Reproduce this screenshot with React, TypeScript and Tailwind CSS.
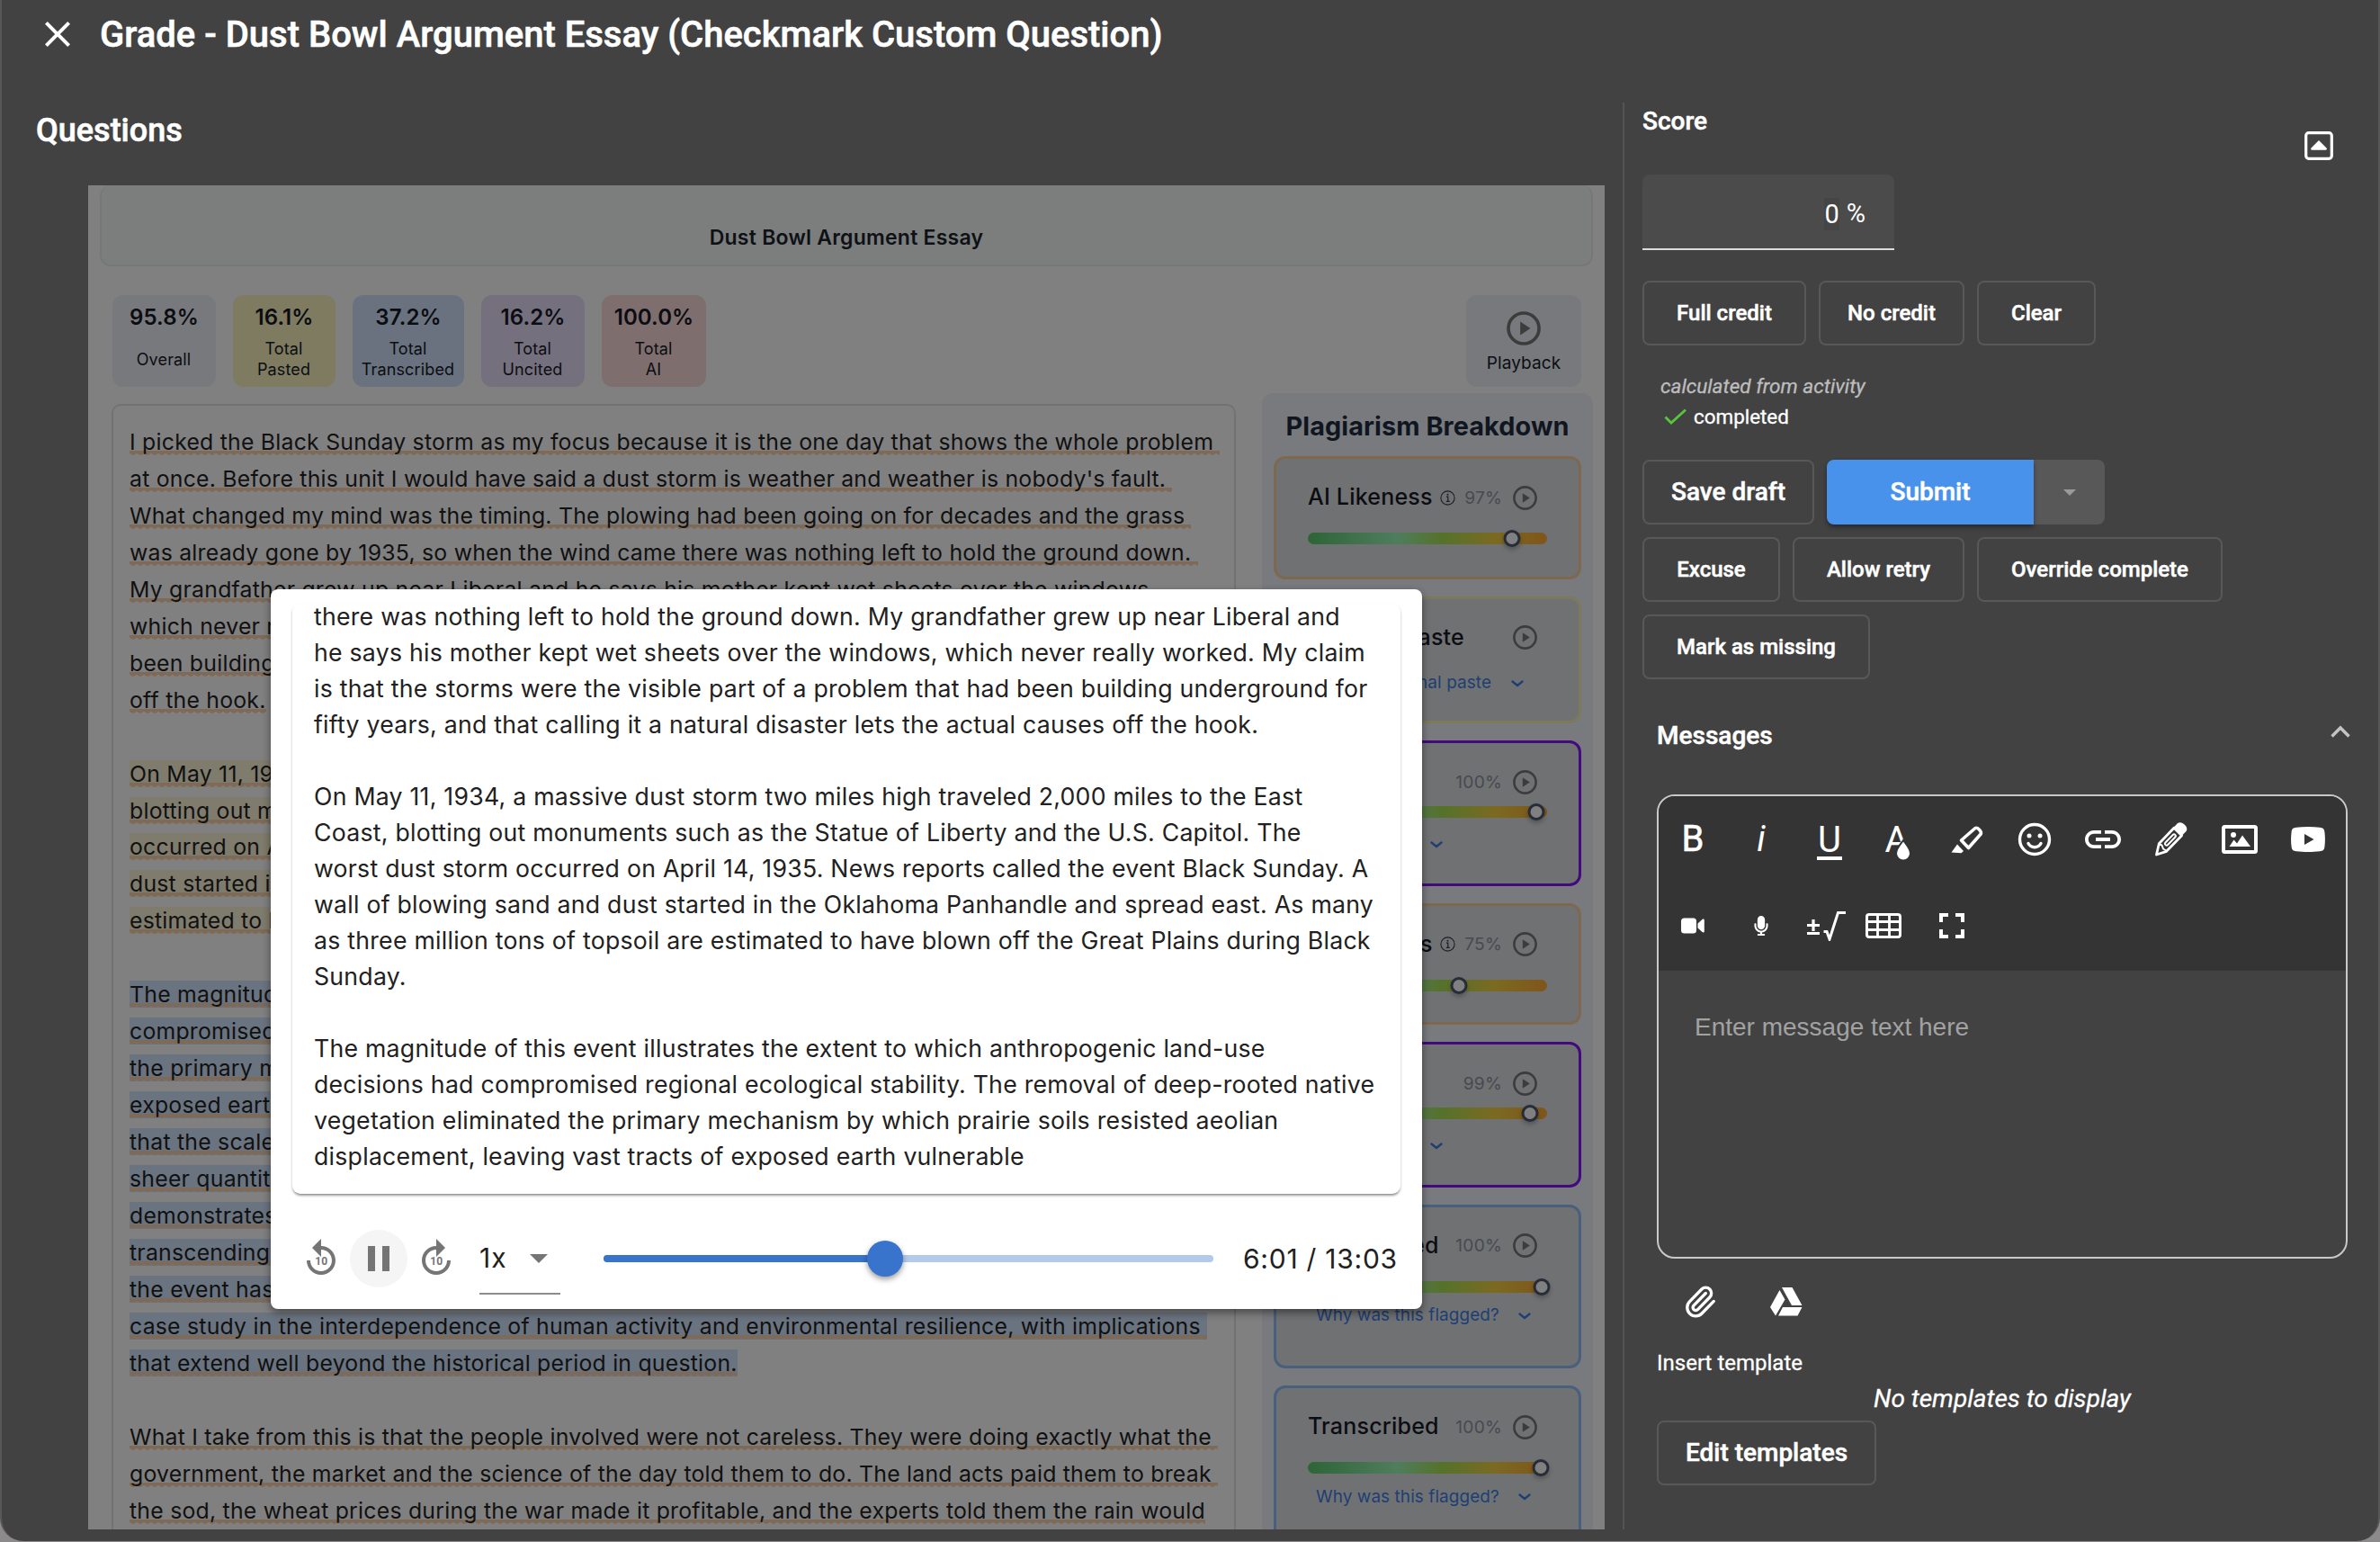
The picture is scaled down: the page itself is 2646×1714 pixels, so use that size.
import React from "react";
import { MdClose, MdLink, MdFullscreen, MdPause, MdArrowDropDown } from "react-icons/md";
import { FaMicrophone } from "react-icons/fa";
import { Paperclip } from "lucide-react";

type Tone = "none" | "pasted" | "transcribed";

const essay: { tone: Tone; lines: string[] }[] = [
  {
    tone: "none",
    lines: [
      "I picked the Black Sunday storm as my focus because it is the one day that shows the whole problem",
      "at once. Before this unit I would have said a dust storm is weather and weather is nobody's fault.",
      "What changed my mind was the timing. The plowing had been going on for decades and the grass",
      "was already gone by 1935, so when the wind came there was nothing left to hold the ground down.",
      "My grandfather grew up near Liberal and he says his mother kept wet sheets over the windows,",
      "which never really worked. My claim is that the storms were the visible part of a problem that had",
      "been building underground for fifty years, and that calling it a natural disaster lets the causes",
      "off the hook.",
    ],
  },
  {
    tone: "pasted",
    lines: [
      "On May 11, 1934, a massive dust storm two miles high traveled 2,000 miles to the East Coast,",
      "blotting out monuments such as the Statue of Liberty and the U.S. Capitol. The worst dust storm",
      "occurred on April 14, 1935. News reports called the event Black Sunday. A wall of blowing sand and",
      "dust started in the Oklahoma Panhandle and spread east. As many as three million tons are",
      "estimated to have blown off the Great Plains during Black Sunday.",
    ],
  },
  {
    tone: "transcribed",
    lines: [
      "The magnitude of this event illustrates the extent to which anthropogenic land-use decisions had",
      "compromised regional ecological stability. The removal of deep-rooted native vegetation",
      "the primary mechanism by which prairie soils resisted aeolian displacement, leaving vast tracts of",
      "exposed earth vulnerable to the wind. Researchers have noted",
      "that the scale of the storm was without precedent, and the",
      "sheer quantity of soil carried across the continent",
      "demonstrates the reach of local decisions,",
      "transcending the boundaries of the region. In this way",
      "the event has become a widely cited",
      "case study in the interdependence of human activity and environmental resilience, with implications",
      "that extend well beyond the historical period in question.",
    ],
  },
  {
    tone: "none",
    lines: [
      "What I take from this is that the people involved were not careless. They were doing exactly what the",
      "government, the market and the science of the day told them to do. The land acts paid them to break",
      "the sod, the wheat prices during the war made it profitable, and the experts told them the rain would",
    ],
  },
];

const toneClass: Record<Tone, string> = {
  none: "",
  pasted: "bg-[#7f7c6d]",
  transcribed: "bg-[#6a7480]",
};

function Essay() {
  return (
    <div className="mt-[19px] ml-[26px] w-[1250px] shrink-0 rounded-t-[10px] border-2 border-b-0 border-[#727272] pt-[20px] pl-[18px] font-['Inter',sans-serif] text-[24.8px] leading-[40.96px] tracking-[0.23px] text-[#111]">
      {essay.map((p, i) => (
        <div key={i} className="mb-[40.96px]">
          {p.lines.map((line, j) => (
            <div key={j} className="whitespace-pre">
              <span className={toneClass[p.tone]}>
                <span className="bg-[radial-gradient(ellipse_4px_3px_at_50%_0,#7e6a57_80%,transparent),linear-gradient(#7e6a57,#7e6a57)] bg-[length:8px_3px,100%_3px] bg-[position:0_100%,0_calc(100%_-_2px)] bg-repeat-x">
                  {j < p.lines.length - 1 ? line + " " : line}
                </span>
              </span>
            </div>
          ))}
        </div>
      ))}
    </div>
  );
}

const stats = [
  { value: "95.8%", label: ["Overall"], cls: "w-[115px] bg-[#78797c]" },
  { value: "16.1%", label: ["Total", "Pasted"], cls: "w-[114px] bg-[#7e7b60]" },
  { value: "37.2%", label: ["Total", "Transcribed"], cls: "w-[124px] bg-[#69727e]" },
  { value: "16.2%", label: ["Total", "Uncited"], cls: "w-[115px] bg-[#75707e]" },
  { value: "100.0%", label: ["Total", "AI"], cls: "w-[116px] bg-[#7f6e6e]" },
];

function PlayRing({ size }: { size: number }) {
  return (
    <svg width={size} height={size} viewBox="0 0 27 27" fill="none" className="shrink-0">
      <circle cx="13.5" cy="13.5" r="12.1" stroke="#3c3c3c" strokeWidth="2.6" />
      <path d="M10.8 8.2v10.6l8-5.3z" fill="#3c3c3c" />
    </svg>
  );
}

function InfoIcon() {
  return (
    <svg width="17" height="17" viewBox="0 0 17 17" fill="none" className="ml-[8px] shrink-0">
      <circle cx="8.5" cy="8.5" r="7.6" stroke="#1c1f26" strokeWidth="1.1" />
      <path d="M7 7.2h1.8v5M6.8 12.3h4" stroke="#1c1f26" strokeWidth="1.2" />
      <circle cx="8.5" cy="4.8" r="1" fill="#1c1f26" />
    </svg>
  );
}

function Chevron() {
  return (
    <svg width="14" height="8" viewBox="0 0 14 8" fill="none" className="shrink-0">
      <path d="M1.5 1.5L7 6l5.5-4.5" stroke="#1d3f73" strokeWidth="2.3" strokeLinecap="round" strokeLinejoin="round" />
    </svg>
  );
}

type Flag = {
  title: string;
  info?: boolean;
  pct?: string;
  knob?: number;
  link?: string;
  linkCls?: string;
  box: string;
  barGap?: string;
  linkGap?: string;
};

const flags: Flag[] = [
  { title: "AI Likeness", info: true, pct: "97%", knob: 227, box: "h-[136.5px] border-[#7e6850]", barGap: "mt-[19px]" },
  { title: "External Paste", link: "View original paste", linkCls: "ml-[16px] w-[188px] text-right", box: "h-[141.5px] border-[#7d795a]", linkGap: "mt-[17px]" },
  { title: "Uncited", pct: "100%", knob: 254, link: "Sources", linkCls: "ml-[9px] w-[105px]", box: "h-[161.5px] border-[#420a7d]", barGap: "mt-[7px]", linkGap: "mt-[16px]" },
  { title: "AI Likeness", info: true, pct: "75%", knob: 168, box: "h-[135.5px] border-[#7e6850]", barGap: "mt-[19px]" },
  { title: "Uncited", pct: "99%", knob: 247, link: "Sources", linkCls: "ml-[9px] w-[105px]", box: "h-[161.5px] border-[#420a7d]", barGap: "mt-[7px]", linkGap: "mt-[16px]" },
  { title: "Transcribed", pct: "100%", knob: 260, link: "Why was this flagged?", linkCls: "ml-[9px] w-[203px]", box: "h-[182.5px] border-[#48607e]", barGap: "mt-[19px]", linkGap: "mt-[12px]" },
  { title: "Transcribed", pct: "100%", knob: 259, link: "Why was this flagged?", linkCls: "ml-[9px] w-[203px]", box: "h-[182.5px] border-[#48607e]", barGap: "mt-[19px]", linkGap: "mt-[12px]" },
];

function FlagCard({ f }: { f: Flag }) {
  return (
    <div className={"shrink-0 rounded-[13px] border-[3px] bg-[#707173] px-[35px] pt-[23px] " + f.box}>
      <div className="flex h-10 items-center whitespace-nowrap pr-[11px]">
        <span className="text-[25px] font-medium tracking-[0.2px] text-[#0b0d12]">{f.title}</span>
        {f.info && <InfoIcon />}
        {f.pct && <span className="ml-auto text-[19.2px] tracking-[0.2px] text-[#474a4f]">{f.pct}</span>}
        <span className={f.pct ? "ml-[12px]" : "ml-auto"}>
          <PlayRing size={27} />
        </span>
      </div>
      {f.knob !== undefined && (
        <div className={"relative h-[13px] w-[266px] rounded-full bg-[linear-gradient(90deg,#2e6436,#4f7d5d_37%,#55722b_56%,#7b6a22_78%,#80551a)] " + f.barGap}>
          <span
            className="absolute top-[-3px] size-[19px] -translate-x-1/2 rounded-full border-[3px] border-[#272d38] bg-[#808080] shadow-[0_3px_5px_rgba(0,0,0,0.25)]"
            style={{ left: f.knob }}
          />
        </div>
      )}
      {f.link && (
        <div className={"flex h-7 items-center whitespace-nowrap text-[18.9px] text-[#1d3f73] " + f.linkGap}>
          <span className={"tracking-[0.1px] " + f.linkCls}>{f.link}</span>
          <span className="ml-[22px]">
            <Chevron />
          </span>
        </div>
      )}
    </div>
  );
}

function Report() {
  return (
    <section className="ml-[98px] h-[1494px] w-[1686px] overflow-hidden bg-[#808080] font-['Inter',sans-serif]">
      <div className="ml-[13px] h-[90px] w-[1660px] rounded-[12px] border-2 border-t-0 border-[#767877] bg-[#7c7e7d] pt-[42px] text-center">
        <h3 className="text-[23px] leading-8 font-semibold tracking-[0.24px] text-[#0e1116]">Dust Bowl Argument Essay</h3>
      </div>
      <div className="mt-8 flex h-[102px] gap-[19px] pr-[26px] pl-[27px] text-[#0b0d12]">
        {stats.map((s) => (
          <div key={s.value} className={"flex flex-col items-center rounded-[12px] pt-[9px] " + s.cls}>
            <div className="text-[24px] leading-8 font-semibold tracking-[0.1px]">{s.value}</div>
            <div className="-ml-px flex h-[60px] flex-col justify-center text-center text-[18px] leading-[23px] tracking-[0.15px]">
              {s.label.map((l) => (
                <div key={l}>{l}</div>
              ))}
            </div>
          </div>
        ))}
        <div className="ml-auto flex w-[128px] flex-col items-center rounded-[12px] bg-[#78797c] pt-[18px]">
          <PlayRing size={38} />
          <div className="mt-[8px] text-[19px] leading-6 tracking-[0.1px]">Playback</div>
        </div>
      </div>
      <div className="flex">
        <Essay />
        <div className="mt-[7px] ml-[29px] flex w-[368px] shrink-0 flex-col gap-[19px] rounded-t-[12px] bg-[#787a7d] px-[13px]">
          <h3 className="mt-[17px] h-[34px] text-center text-[28.8px] leading-[39px] font-bold tracking-[0.1px] whitespace-nowrap text-[#10161f]">Plagiarism Breakdown</h3>
          {flags.map((f, i) => (
            <FlagCard key={i} f={f} />
          ))}
        </div>
      </div>
    </section>
  );
}

const playbackLines = [
  "there was nothing left to hold the ground down. My grandfather grew up near Liberal and",
  "he says his mother kept wet sheets over the windows, which never really worked. My claim",
  "is that the storms were the visible part of a problem that had been building underground for",
  "fifty years, and that calling it a natural disaster lets the actual causes off the hook.",
  "",
  "On May 11, 1934, a massive dust storm two miles high traveled 2,000 miles to the East",
  "Coast, blotting out monuments such as the Statue of Liberty and the U.S. Capitol. The",
  "worst dust storm occurred on April 14, 1935. News reports called the event Black Sunday. A",
  "wall of blowing sand and dust started in the Oklahoma Panhandle and spread east. As many",
  "as three million tons of topsoil are estimated to have blown off the Great Plains during Black",
  "Sunday.",
  "",
  "The magnitude of this event illustrates the extent to which anthropogenic land-use",
  "decisions had compromised regional ecological stability. The removal of deep-rooted native",
  "vegetation eliminated the primary mechanism by which prairie soils resisted aeolian",
  "displacement, leaving vast tracts of exposed earth vulnerable",
];

function Skip10({ forward }: { forward?: boolean }) {
  return (
    <svg width="48" height="48" viewBox="0 0 24 24" fill="#757575" className="shrink-0">
      <path
        transform={forward ? "matrix(-1 0 0 1 24 0)" : undefined}
        d="M11.99 5V1l-5 5 5 5V7c3.31 0 6 2.69 6 6s-2.69 6-6 6-6-2.69-6-6h-2c0 4.42 3.58 8 8 8s8-3.58 8-8-3.58-8-8-8z"
      />
      <text x="12.1" y="15.4" textAnchor="middle" className="font-['Roboto',sans-serif] text-[6px] font-bold">
        10
      </text>
    </svg>
  );
}

function PlaybackDialog() {
  return (
    <div className="absolute top-[655px] left-[301px] h-[800px] w-[1280px] rounded-[8px] bg-white font-['Inter',sans-serif] text-[#212121] shadow-[0_4px_10px_rgba(0,0,0,0.45)]">
      <div className="h-4" />
      <div className="mx-6 flex h-[656px] items-start rounded-[9px] pl-[24px] shadow-[0_3px_3px_-2px_rgba(0,0,0,0.35),0_2px_3px_rgba(0,0,0,0.25)]">
        <div className="-mt-[6px] text-[26.67px] leading-[40px] tracking-[0.25px]">
          {playbackLines.map((l, i) => (
            <div key={i} className="h-10 whitespace-nowrap">
              {l}
            </div>
          ))}
        </div>
      </div>
      <div className="flex h-[128px] items-center pt-4 pl-8">
        <Skip10 />
        <div className="ml-2 flex size-16 items-center justify-center rounded-full bg-[#f5f5f5]">
          <MdPause size={48} color="#757575" />
        </div>
        <div className="ml-2">
          <Skip10 forward />
        </div>
        <div className="ml-6 flex h-[80px] w-[90px] items-center border-b-2 border-[#8c8c8c]">
          <span className="text-[30px] tracking-[1px]">1x</span>
          <MdArrowDropDown size={48} color="#757575" className="-mr-[0px] ml-auto shrink-0" />
        </div>
        <div className="relative ml-[48px] h-[8px] w-[678px] rounded-full bg-[#b3caec]">
          <div className="h-full w-[313px] rounded-l-full bg-[#3874cb]" />
          <span className="absolute -top-[16px] left-[293px] size-10 rounded-full bg-[#3874cb] shadow-[0_3px_6px_rgba(0,0,0,0.4)]" />
        </div>
        <span className="ml-[33px] text-[30px] tracking-[0.75px] whitespace-nowrap">6:01 / 13:03</span>
      </div>
    </div>
  );
}

function OutlineButton({ cls, children }: { cls: string; children: React.ReactNode }) {
  return (
    <button className={"flex h-[72px] shrink-0 items-center justify-center rounded-[8px] border-2 border-[#585858] font-medium whitespace-nowrap text-white [-webkit-text-stroke:0.5px_white] " + cls}>
      {children}
    </button>
  );
}

function Cell({ children, cls = "w-[76px]" }: { children: React.ReactNode; cls?: string }) {
  return <div className={"flex h-[96px] shrink-0 items-center justify-center " + cls}>{children}</div>;
}

function Toolbar() {
  return (
    <div className="h-[194px] rounded-t-[18px] bg-[#343434] text-white">
      <div className="flex">
        <Cell>
          <span className="text-[40px] leading-none [-webkit-text-stroke:0.6px_white]">B</span>
        </Cell>
        <Cell>
          <span className="text-[40px] leading-none italic">i</span>
        </Cell>
        <Cell>
          <span className="mt-[5px] flex w-[28px] justify-center border-b-4 border-white text-[40px] leading-[36px]">U</span>
        </Cell>
        <Cell>
          <svg width="48" height="48" viewBox="0 0 48 48">
            <text x="9.5" y="38" className="fill-white font-['Roboto',sans-serif] text-[40px]">
              A
            </text>
            <path d="M30 25c3.6 5 8 9.500 8 14.500a8 8 0 0 1-16 0c0-5 4.400-9.500 8-14.500z" className="fill-white stroke-[#343434]" strokeWidth="2" />
          </svg>
        </Cell>
        <Cell>
          <svg width="48" height="48" viewBox="0 0 48 48" fill="none" stroke="#fff" strokeWidth="3.600" strokeLinejoin="round">
            <path d="M34 11.500c2.500-1.200 7.500 3.500 6.200 6.500L26.500 33.500 18.500 25z" />
            <path d="M14 29.500l7 7.500-2.500 2.200-11-.8z" fill="#fff" stroke="none" />
          </svg>
        </Cell>
        <Cell>
          <svg width="48" height="48" viewBox="0 0 48 48" fill="none" stroke="#fff" strokeWidth="3.400">
            <circle cx="24" cy="24" r="16.500" />
            <path d="M17 28.500c3 5.600 11 5.600 14 0" strokeLinecap="round" />
            <circle cx="18" cy="20" r="2.500" fill="#fff" stroke="none" />
            <circle cx="30" cy="20" r="2.500" fill="#fff" stroke="none" />
          </svg>
        </Cell>
        <Cell>
          <MdLink size={48} />
        </Cell>
        <Cell>
          <svg width="48" height="48" viewBox="0 0 48 48" fill="none" stroke="#fff" strokeLinecap="round" strokeLinejoin="round">
            <path d="M7.500 41l2.800-12.200L27 11.300l8.600 8.400-17 17.600z" strokeWidth="2.800" />
            <path d="M26.500 10.800L31 6c4.500-3.500 13 4.500 9.500 9l-4.600 4.800z" fill="#fff" stroke="none" />
            <path d="M18.800 28.800l8.200-8.600" strokeWidth="5.600" />
            <path d="M18.800 28.800l8.200-8.600" stroke="#343434" strokeWidth="1.600" />
            <path d="M10.500 29.500l3 1 1.500 4 3.200 2" strokeWidth="2" />
          </svg>
        </Cell>
        <Cell>
          <svg width="48" height="48" viewBox="0 0 48 48" fill="none">
            <rect x="6" y="10" width="36" height="28" rx="1.500" stroke="#fff" strokeWidth="4" />
            <circle cx="17" cy="19" r="3" fill="#fff" />
            <path d="M12.500 32l5-7.500 3.500 4 6-9L36 32z" fill="#fff" />
          </svg>
        </Cell>
        <Cell>
          <svg width="48" height="48" viewBox="0 0 48 48">
            <path d="M11 10.700c8-.9 18-.9 26 0 3.500.4 5 1.500 5.400 5 .7 5.500.7 11 0 16.500-.4 3.500-1.900 4.600-5.400 5-8 .9-18 .9-26 0-3.500-.4-5-1.500-5.400-5-.7-5.500-.7-11 0-16.500.4-3.500 1.900-4.600 5.400-5z" fill="#fff" />
            <path d="M20 18v12l10.500-6z" fill="#343434" />
          </svg>
        </Cell>
      </div>
      <div className="flex">
        <Cell>
          <svg width="26" height="18" viewBox="0 0 26 18" fill="#fff">
            <rect x="0" y="0.500" width="17" height="17" rx="3.500" />
            <path d="M18.500 6.500l5-4.500c1-.8 2.300-.4 2.300.8v12.400c0 1.200-1.300 1.600-2.300.8l-5-4.500z" />
          </svg>
        </Cell>
        <Cell>
          <FaMicrophone size={22} />
        </Cell>
        <Cell cls="w-[60px] pl-[7px]">
          <svg width="46" height="34" viewBox="0 0 46 34" fill="none" stroke="#fff" className="shrink-0">
            <path d="M2 16.500h14M9 10v13M2 25.500h14" strokeWidth="3.200" />
            <path d="M20.500 23.500h3.500l3 8.500 9.500-29.500H45" strokeWidth="3" />
          </svg>
        </Cell>
        <Cell>
          <svg width="40" height="28" viewBox="0 0 40 28" fill="none" stroke="#fff" strokeWidth="3">
            <rect x="1.500" y="1.500" width="37" height="25" rx="2.500" />
            <path d="M13.500 1.500v25M26.500 1.500v25M1.500 9.500h37M1.500 18.500h37" strokeWidth="2.800" />
          </svg>
        </Cell>
        <Cell>
          <MdFullscreen size={48} />
        </Cell>
      </div>
    </div>
  );
}

function ScorePanel() {
  return (
    <aside className="mt-[38px] h-[1586px] flex-1 border-l-2 border-[#545454] pl-[20px] font-['Roboto',sans-serif] text-white">
      <div className="flex h-[80px] items-start justify-between pr-[52px]">
        <h3 className="mt-px text-[28px] leading-10 font-medium [-webkit-text-stroke:0.5px_white]">Score</h3>
        <svg width="32" height="32" viewBox="0 0 32 32" fill="none" className="mt-8">
          <rect x="1.700" y="1.700" width="28.600" height="28.600" rx="3" stroke="#fff" strokeWidth="3.200" />
          <path d="M16 10l8.500 8.500c.8 1 .3 2.300-1 2.300h-15c-1.300 0-1.800-1.300-1-2.300z" fill="#fff" />
        </svg>
      </div>
      <div className="flex h-[84px] w-[280px] items-center justify-end rounded-t-[8px] border-b-2 border-[#dcdcdc] bg-[#4b4b4b] pt-[6px] pr-[32px] text-[29px]">
        <span className="bg-[#454545] leading-9">0</span>
        <span className="ml-[8px]">%</span>
      </div>
      <div className="mt-[34px] flex gap-[14px] text-[24px]">
        <OutlineButton cls="w-[182px]">Full credit</OutlineButton>
        <OutlineButton cls="w-[162px]">No credit</OutlineButton>
        <OutlineButton cls="w-[132px]">Clear</OutlineButton>
      </div>
      <div className="mt-[30px] pl-[20px] text-[22.6px] leading-8 text-[#bdbdbd] italic [-webkit-text-stroke:0.3px_#bdbdbd]">calculated from activity</div>
      <div className="flex h-[34px] items-center pl-[24px] text-[22.4px] leading-[34px] [-webkit-text-stroke:0.3px_white]">
        <svg width="26" height="18" viewBox="0 0 26 18" fill="none">
          <path d="M1.500 9.500l6.500 6.500L24 1.500" stroke="#58c63c" strokeWidth="2.800" />
        </svg>
        <span className="ml-[7px]">completed</span>
      </div>
      <div className="mt-[31px] flex">
        <OutlineButton cls="w-[191px] text-[28px]">Save draft</OutlineButton>
        <button className="z-10 ml-[14px] h-[72px] w-[230px] rounded-l-[8px] bg-[#4992eb] text-[28px] font-medium shadow-[0_3px_5px_rgba(0,0,0,0.4)] [-webkit-text-stroke:0.5px_white]">Submit</button>
        <button className="flex h-[72px] w-[79px] items-center justify-center rounded-r-[8px] bg-[#585858]">
          <svg width="14" height="7" viewBox="0 0 14 7" fill="#9a9a9a">
            <path d="M0 0h14l-7 7z" />
          </svg>
        </button>
      </div>
      <div className="mt-[14px] flex gap-[14px] text-[24px]">
        <OutlineButton cls="w-[153px]">Excuse</OutlineButton>
        <OutlineButton cls="w-[191px]">Allow retry</OutlineButton>
        <OutlineButton cls="w-[273px]">Override complete</OutlineButton>
      </div>
      <OutlineButton cls="mt-[14px] w-[253px] text-[24px]">Mark as missing</OutlineButton>
      <div className="mt-[43px] ml-[16px] flex h-10 items-center justify-between pr-[33px]">
        <h3 className="text-[28px] leading-10 font-medium [-webkit-text-stroke:0.5px_white]">Messages</h3>
        <svg width="22" height="14" viewBox="0 0 22 14" fill="none" className="-mt-[11px]">
          <path d="M1.500 12.500L11 3l9.500 9.500" stroke="#c4c4c4" strokeWidth="3.400" />
        </svg>
      </div>
      <div className="mt-[45px] ml-[16px] h-[516px] w-[768px] rounded-[20px] border-2 border-[#c9c9c9]">
        <Toolbar />
        <div className="pt-[40px] pl-[40px] font-['Liberation_Sans',sans-serif] text-[28px] leading-[45px] text-[#a2a2a2]">Enter message text here</div>
      </div>
      <div className="ml-[16px] flex">
        <Cell cls="w-[96px]">
          <Paperclip size={38} strokeWidth={2.1} />
        </Cell>
        <Cell cls="w-[96px]">
          <svg width="36" height="32" viewBox="0 0 36 32" fill="#fff">
            <path d="M13 0h11.500l11 20H24zM14 22h21.500l-5 9.500H9zM10.500 3l6 10.500L6 31.500 0 22z" />
          </svg>
        </Cell>
      </div>
      <div className="ml-[16px] w-[768px]">
        <div className="text-[24px] leading-10 [-webkit-text-stroke:0.3px_white]">Insert template</div>
        <div className="text-center text-[28px] leading-[39px] italic [-webkit-text-stroke:0.3px_white]">No templates to display</div>
        <OutlineButton cls="mt-[5px] w-[244px] text-[28px]">Edit templates</OutlineButton>
      </div>
    </aside>
  );
}

export default function App() {
  return (
    <div className="h-[1714px] w-[2646px] overflow-hidden bg-[#8d8a8c]">
      <main className="relative h-[1713px] w-[2646px] overflow-hidden rounded-b-[26px] border-x-2 border-[#575757] bg-[#424242]">
        <div className="-mx-[2px]">
          <header className="flex h-[76px] items-center pl-10 font-['Roboto',sans-serif] text-white">
            <MdClose size={48} />
            <h1 className="mt-px ml-[23px] text-[40px] leading-none font-medium [-webkit-text-stroke:0.6px_white]">Grade - Dust Bowl Argument Essay (Checkmark Custom Question)</h1>
          </header>
          <div className="flex">
            <div className="w-[1804px] shrink-0">
              <h2 className="mt-[45px] mb-[36px] ml-[40px] font-['Roboto',sans-serif] text-[36px] leading-[49px] font-medium text-white [-webkit-text-stroke:0.6px_white]">Questions</h2>
              <Report />
            </div>
            <ScorePanel />
          </div>
        </div>
        <div className="absolute top-0 -left-[2px]">
          <PlaybackDialog />
        </div>
      </main>
    </div>
  );
}
